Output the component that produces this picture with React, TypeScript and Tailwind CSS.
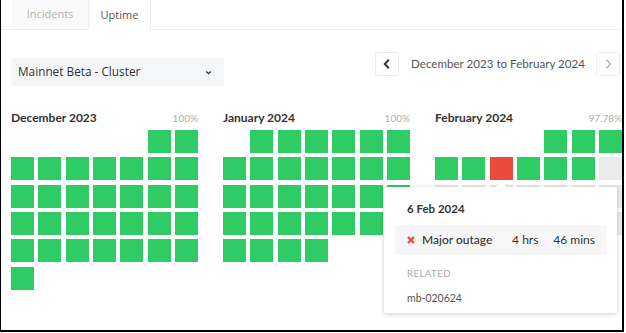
import React from "react";

type Day = "g" | "r" | "e" | null;

function monthCells(offset: number, days: number, special: Record<number, Day> = {}, lastData = days): Day[] {
  const cells: Day[] = [];
  for (let i = 0; i < offset; i++) cells.push(null);
  for (let d = 1; d <= days; d++) {
    if (special[d]) cells.push(special[d]);
    else if (d > lastData) cells.push("e");
    else cells.push("g");
  }
  return cells;
}

const months = [
  { name: "December 2023", pct: "100%", cells: monthCells(5, 31) },
  { name: "January 2024", pct: "100%", cells: monthCells(1, 31) },
  { name: "February 2024", pct: "97.78%", cells: monthCells(4, 29, { 6: "r" }, 9) },
];

const cal = { fontFamily: "Lato, 'Open Sans', sans-serif" };

function Month({ m }: { m: (typeof months)[number] }) {
  return (
    <div className="w-[187px] shrink-0">
      <div className="flex h-[16px] items-center justify-between mb-[4px]" style={cal}>
        <span className="text-[12px] font-bold text-[#333]">{m.name}</span>
        <span className="text-[10px] text-[#b0b0b0]">{m.pct}</span>
      </div>
      <div className="grid grid-cols-[repeat(7,23px)] gap-x-[4.33px] gap-y-[4.33px]">
        {m.cells.map((c, i) => (
          <div
            key={i}
            className={
              "h-[23px] w-[23px] " +
              (c === "g" ? "bg-[#2fcc66]" : c === "r" ? "bg-[#e74c3c]" : c === "e" ? "bg-[#eaeaea]" : "")
            }
          />
        ))}
      </div>
    </div>
  );
}

export default function App() {
  return (
    <div className="relative h-[332px] w-[624px] overflow-hidden border-b-2 border-l border-r-2 border-black bg-white">
      {/* Tabs */}
      <div className="flex h-[30px]" style={{ fontFamily: "'Open Sans', sans-serif" }}>
        <div className="w-[11px] border-b border-[#eeeeee]" />
        <div className="flex w-[76px] items-center justify-center border-b border-[#eeeeee] bg-[#fafafa] text-[11px] text-[#b3b3b3]">
          Incidents
        </div>
        <div className="flex w-[63px] items-center justify-center border-x border-[#eeeeee] bg-white text-[11px] text-[#555]">
          Uptime
        </div>
        <div className="flex-1 border-b border-[#eeeeee]" />
      </div>

      {/* Controls */}
      <div className="mt-[22px] flex items-start pl-[10px]">
        <div
          className="mt-[6px] flex h-[28px] w-[213px] items-center justify-between rounded-[2px] bg-[#f5f6f7] pl-[7px] pr-[11px] text-[11.8px] text-[#333]"
          style={{ fontFamily: "'Open Sans', sans-serif" }}
        >
          <span>Mainnet Beta - Cluster</span>
          <svg width="9" height="9" viewBox="0 0 10 10">
            <path d="M2.5 3.8 L5 6.3 L7.5 3.8" fill="none" stroke="#333" strokeWidth="1.5" />
          </svg>
        </div>
        <div className="ml-auto flex items-center">
          <div className="flex h-[24px] w-[24px] items-center justify-center rounded-[2px] border border-[#eaeaea]">
            <svg width="10" height="12" viewBox="0 0 10 12">
              <path d="M6.8 1.8 L2.8 6 L6.8 10.2" fill="none" stroke="#333" strokeWidth="2" />
            </svg>
          </div>
          <span className="ml-[12px] mr-[11px] text-[11.6px] text-[#555]" style={cal}>
            December 2023 to February 2024
          </span>
          <div className="flex h-[24px] w-[24px] items-center justify-center rounded-[2px] border border-[#f0f0f0]">
            <svg width="10" height="12" viewBox="0 0 10 12">
              <path d="M3.2 1.8 L7.2 6 L3.2 10.2" fill="none" stroke="#bbb" strokeWidth="1.6" />
            </svg>
          </div>
          <div className="w-[2px]" />
        </div>
      </div>

      {/* Calendars */}
      <div className="mt-[24px] flex gap-[25px] pl-[10px]">
        {months.map((m) => (
          <Month key={m.name} m={m} />
        ))}
      </div>

      {/* Tooltip */}
      <div
        className="absolute left-[383px] top-[187px] h-[126px] w-[233px] rounded-[2px] bg-white shadow-[0_1px_5px_rgba(0,0,0,0.2)]"
        style={cal}
      >
        <div className="absolute -top-[4px] left-[113px] h-[8px] w-[8px] rotate-45 bg-white shadow-[-1px_-1px_2px_rgba(0,0,0,0.06)]" />
        <div className="relative px-[11px] pt-[13px]">
          <div className="pl-[12px] text-[11.5px] font-bold text-[#333]">6 Feb 2024</div>
          <div className="mt-[8px] flex h-[30px] items-center bg-[#f6f6f6] pl-[12px] pr-[11px] text-[12px] text-[#333]">
            <svg width="8" height="8" viewBox="0 0 8 8" className="mr-[7px]">
              <path d="M1 1 L7 7 M7 1 L1 7" stroke="#e74c3c" strokeWidth="2.2" />
            </svg>
            <span className="font-medium">Major outage</span>
            <span className="ml-auto">4 hrs</span>
            <span className="ml-[15px]">46 mins</span>
          </div>
          <div className="mt-[12px] pl-[12px] text-[9.5px] tracking-[0.5px] text-[#aaa]">RELATED</div>
          <div className="mt-[9px] pl-[12px] text-[10.5px] text-[#555]">mb-020624</div>
        </div>
      </div>
    </div>
  );
}
